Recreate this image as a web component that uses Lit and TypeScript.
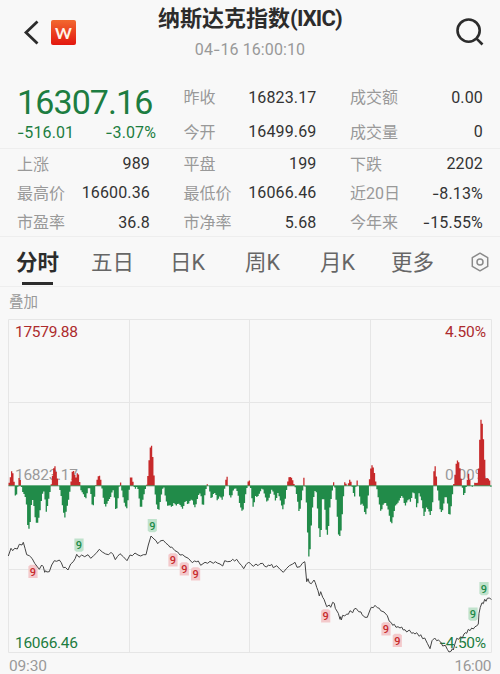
import { LitElement, html, css, svg } from 'lit';
import { customElement, property } from 'lit/decorators.js';
import { classMap } from 'lit/directives/class-map.js';

type Segment = { dx: number; dy: number; data: string };
type Point = [number, number];

/** Samples are stored in thirds of a pixel, "x,y" pairs separated by blanks. */
const SCALE = 3;

const VOLUME: Segment[] = [
  {
    dx: 0,
    dy: 0,
    data: `25,-25 28,18 33,30 36,53 40,28 44,0 46,-30 49,-30 52,-12 55,8 58,30 63,8 66,-15 75,-30 80,-60
      82,-115 86,-125 89,-138 92,-80 96,-40 100,-45 106,-100 111,-118 118,-90 124,-45 130,-10 134,-30
      140,-90 143,-55 149,-25 153,0 156,22 160,45 163,66 168,45 173,18 176,0 182,-20 188,-65 194,-98
      200,-70 207,-35 212,0 215,35 219,50 223,35 228,25 233,42 238,25 241,-10 250,-25 257,-40 262,-20
      267,0 272,-20 278,-70 283,-40 287,0 290,15 297,35 302,20 306,-8 311,-45 316,-65 325,-45 333,-32
      337,-15 341,-12 346,-65 349,-80 354,-40 358,-2 363,14 366,-20 375,-60 381,-68 387,-20 391,25
      397,25 400,5 405,-12 409,-2 414,-10 419,-50 423,-74 429,-40 434,-18 438,-2 442,10 445,50 450,110
      453,126 457,112 460,55 463,20 465,-20 470,-60 476,-78 482,-40 487,-10 492,-5 497,-40 503,-60`,
  },
  {
    dx: 480,
    dy: 0,
    data: `0,-75 5,-5 10,0 15,-35 22,-60 30,-58 36,-65 42,-50 48,-60 55,-52 62,-60 68,-70 73,-55 77,-42
      84,-58 90,-45 96,-40 102,-60 106,-66 112,-40 118,-20 123,-30 129,-70 134,-30 139,-5 143,9 147,-5
      154,-42 160,-25 166,-20 172,-45 180,-30 188,-45 193,-15 197,15 200,34 204,12 207,-25 214,-38
      219,-15 226,-5 233,-20 238,-50 245,-76 251,-70 256,-30 261,-5 265,16 270,16 273,-20 280,-68
      286,-30 292,-35 300,-20 307,-5 315,-30 321,-50 328,-35 335,-12 341,-20 347,-48 354,-20 360,-40
      368,-72 375,-45 380,-10 384,18 388,28 396,23 402,5 406,-5 412,-40 418,-85 424,-45 429,-5 432,28
      435,0 438,-20 441,-105 445,-185 448,-240 452,-150 457,-70 463,-20 468,-10 472,-60 478,-156
      483,-150 487,-40 493,-40 498,-130 503,-150 506,-120`,
  },
  {
    dx: 990,
    dy: 0,
    data: `0,-60 5,-30 9,0 12,18 15,-10 20,-60 25,-145 29,-152 34,-130 39,-50 43,0 46,26 49,-5 54,4
      60,21 65,5 70,-20 73,-40 78,0 83,24 87,-20 93,-60 98,-50 104,-80 109,-88 114,-40 118,15 123,58
      127,63 132,48 136,20 140,-5 147,-50 153,-80 160,-55 166,-50 173,-65 179,-95 184,-119 190,-90
      196,-60 205,-50 212,-35 217,-28 225,-62 232,-45 238,-40 242,-50 249,-18 254,-25 261,-73 267,-22
      274,-40 282,-91 290,-63 296,-75 302,-91 308,-50 312,50 317,62 320,15 324,-25 330,-70 336,-83
      342,-50 347,-25 353,-55 358,-100 364,-60 369,-10 374,25 380,79 388,68 393,25 397,-5 402,-34
      407,-10 411,10 415,40 420,15 424,-5 431,0 437,17 440,-8 445,40 449,135 454,216 459,160 463,100
      467,18 470,37 473,10 477,30 481,0 484,-5`,
  },
];

const PRICE: Segment[] = [
  {
    dx: 0,
    dy: 1530,
    data: `25,138 33,115 38,122 44,115 52,117 58,103 66,105 70,97 75,115 80,134 88,137 96,145 104,160
      112,170 118,178 125,165 130,170 134,187 137,182 140,186 148,185 155,165 163,152 170,154 178,150
      184,158 190,173 196,172 204,180 212,162 220,155 226,145 230,133 237,142 245,135 254,140 264,134
      272,145 280,138 290,128 298,118 307,126 317,132 326,134 333,127 339,133 346,149 352,140 360,131
      370,140 381,152 390,135 397,137 405,129 414,135 422,138 430,134 438,134 445,105 453,78 462,87
      468,92 473,101 478,96 480,94`,
  },
  {
    dx: 480,
    dy: 1200,
    data: `3,422 10,421 18,430 25,435 30,442 35,441 45,452 53,456 60,465 68,464 75,470 85,475 97,488
      103,483 110,485 115,483 122,496 135,487 143,490 150,484 160,490 166,485 172,489 180,492 188,498
      194,482 203,485 212,484 218,478 224,483 230,478 237,488 245,497 251,506 258,494 266,486 272,492
      280,499 288,492 294,497 300,491 308,490 314,499 320,501 325,495 330,497 335,493 340,503 350,497
      360,508 370,517 380,505 388,497 398,492 405,487 411,502 420,500 427,490 434,485`,
  },
  {
    dx: 870,
    dy: 1650,
    data: `45,40 50,95 54,86 58,98 64,101 72,90 76,98 80,112 84,122 88,138 92,125 98,142 102,148 110,170
      118,165 122,172 128,157 133,160 136,175 145,190 150,208 152,200 154,210 158,196 164,198 170,192
      175,193 180,182 188,188 192,178 198,175 206,185 213,186 216,194 225,202 232,202 240,180 244,172
      250,173 255,166 262,173 268,175 272,182 282,186 292,197 298,214 304,218 308,226 313,223 318,232
      324,230 330,234 335,231 340,240 345,239 350,246 358,240 365,250 370,248 375,252 380,248 388,259
      392,254 398,266 404,264 412,280 420,296 426,272 434,264 440,272 445,270 452,276 458,288 466,286
      472,298 477,306 484,303 487,296 490,300 494,284 500,265 506,268 512,260 517,264 522,252 526,248
      530,250 535,238 540,242 545,234 550,237 555,230 560,228 565,222 567,190 571,172 576,158 580,161
      584,148 588,154 592,145 599,144 604,149`,
  },
];

const MARKS: { x: number; y: number; up: boolean }[] = [
  { x: 33, y: 571.5, up: false },
  { x: 79, y: 545, up: true },
  { x: 152.3, y: 525.5, up: true },
  { x: 173, y: 560, up: false },
  { x: 184.3, y: 569, up: false },
  { x: 195.6, y: 574, up: false },
  { x: 325.7, y: 616, up: false },
  { x: 386, y: 629, up: false },
  { x: 397.3, y: 640.5, up: false },
  { x: 473, y: 614, up: true },
  { x: 484, y: 588.5, up: true },
];

const QUOTES = [
  [['昨收', '16823.17'], ['成交额', '0.00']],
  [['今开', '16499.69'], ['成交量', '0']],
];

const DETAILS = [
  ['上涨', '989'], ['平盘', '199'], ['下跌', '2202'],
  ['最高价', '16600.36'], ['最低价', '16066.46'], ['近20日', '-8.13%'],
  ['市盈率', '36.8'], ['市净率', '5.68'], ['今年来', '-15.55%'],
];

const TABS = ['分时', '五日', '日K', '周K', '月K', '更多'];

function decode(segments: Segment[]): Point[] {
  return segments.flatMap(({ dx, dy, data }) =>
    data.trim().split(/\s+/).map((pair): Point => {
      const [x, y] = pair.split(',').map(Number);
      return [(x + dx) / SCALE, (y + dy) / SCALE];
    })
  );
}

/** Linear interpolation of a sampled series. */
function valueAt(points: Point[], x: number): number {
  const i = points.findIndex((p) => p[0] >= x);
  if (i <= 0) return i === 0 ? points[0][1] : points[points.length - 1][1];
  const [x0, y0] = points[i - 1];
  const [x1, y1] = points[i];
  return y0 + ((y1 - y0) * (x - x0)) / (x1 - x0);
}

/** Sets the sign of a negative number in a face with a wider hyphen. */
function signed(value: string) {
  return value.startsWith('-') ? html`<span class="sign">-</span>${value.slice(1)}` : value;
}

/**
 * `<minute-chart>` – intraday price line with the per-minute bars around the zero axis.
 */
@customElement('minute-chart')
export class MinuteChart extends LitElement {
  static styles = css`
    :host {
      display: block;
    }

    svg {
      display: block;
      font-family: Roboto, 'Noto Sans CJK SC', sans-serif;
    }

    .grid {
      fill: none;
      stroke: #e6e6e6;
      stroke-width: 1;
    }

    .bars.up {
      fill: #c72a2b;
    }

    .bars.down {
      fill: #218b49;
    }

    .axis {
      stroke: #218b49;
      stroke-width: 0.8;
    }

    .price {
      fill: none;
      stroke: #444;
      stroke-width: 1;
      stroke-linejoin: round;
    }

    .label {
      font-size: 15.5px;
      fill: #9a9a9a;
    }

    .label.up {
      fill: #ad2b2d;
    }

    .label.down {
      fill: #1d7d41;
    }

    .sign {
      font-family: Inter, sans-serif;
    }

    .end {
      text-anchor: end;
    }

    .tag.up {
      fill: #c0e2cc;
    }

    .tag.down {
      fill: #f3c9cb;
    }

    .nine {
      font-size: 11px;
      font-weight: 500;
      text-anchor: middle;
    }

    .nine.up {
      fill: #218b49;
    }

    .nine.down {
      fill: #c72a2b;
    }
  `;

  private barPath(up: boolean): string {
    const points = decode(VOLUME);
    const step = 483 / 390;
    let d = '';
    for (let i = 0; i < 390; i++) {
      const x = 8.5 + i * step;
      const v = valueAt(points, x + step / 2);
      if (v > 0 === up && Math.abs(v) > 0.4) {
        d += `M${x.toFixed(2)} 485.8h${(step + 0.05).toFixed(2)}v${(-v).toFixed(2)}h${(-step - 0.05).toFixed(2)}z`;
      }
    }
    return d;
  }

  private renderMark({ x, y, up }: { x: number; y: number; up: boolean }) {
    const cls = up ? 'up' : 'down';
    // green tags point down at the line, red ones point up
    const d = up
      ? `M${x - 4.6} ${y - 6.4}h9.2v11.6l-2 1.6h-5.2l-2-1.6z`
      : `M${x - 4.6} ${y + 6.4}h9.2v-11.6l-2-1.6h-5.2l-2 1.6z`;
    return svg`
      <path class="tag ${cls}" d=${d}></path>
      <text class="nine ${cls}" x=${x} y=${y + 4}>9</text>
    `;
  }

  render() {
    const line = decode(PRICE).map((p) => p.map((n) => n.toFixed(1)).join(',')).join(' ');
    return html`
      <svg width="500" height="356" viewBox="0 318 500 356">
        <path
          class="grid"
          d="M8.5 319.5h483v333h-483zM8.5 402.5h483M8.5 569.5h483M129.5 319.5v333M249.5 319.5v333M370.5 319.5v333"
        ></path>
        <text class="label" x="15" y="480" textLength="63">16823.17</text>
        <text class="label end" x="486" y="480" textLength="41">0.00%</text>
        <path class="bars up" d=${this.barPath(true)}></path>
        <path class="bars down" d=${this.barPath(false)}></path>
        <path class="axis" d="M8.5 485.8h483"></path>
        ${MARKS.map((m) => this.renderMark(m))}
        <text class="label up" x="15" y="336.5" textLength="63">17579.88</text>
        <text class="label up end" x="486" y="336.5" textLength="41">4.50%</text>
        <text class="label down" x="15" y="647.5" textLength="63">16066.46</text>
        <text class="label down end" x="486" y="647.5" textLength="47"><tspan class="sign">-</tspan>4.50%</text>
        <polyline class="price" points=${line}></polyline>
        <text class="label" x="9" y="670.5" textLength="38">09:30</text>
        <text class="label end" x="491.5" y="670.5" textLength="37">16:00</text>
      </svg>
    `;
  }
}

/**
 * `<app-root>` – quote page of a stock index.
 */
@customElement('app-root')
export class AppRoot extends LitElement {
  static styles = css`
    :host {
      display: block;
      width: 500px;
      height: 674px;
      overflow: hidden;
      background: #f8f8f8;
      color: #333;
      font-family: Roboto, 'Noto Sans CJK SC', sans-serif;
      font-size: 16px;
    }

    header {
      display: grid;
      grid-template-columns: 100px 1fr 100px;
      height: 80px;
    }

    .left {
      display: flex;
      align-items: flex-start;
      gap: 12px;
      padding: 20px 0 0 23px;
    }

    .logo {
      display: grid;
      place-items: center;
      width: 25px;
      height: 25px;
      border-radius: 2px;
      background: linear-gradient(#f2682f, #e3170f);
      color: #fff3e8;
      font: 700 16px/25px Lato, sans-serif;
    }

    .heading {
      display: flex;
      flex-direction: column;
      align-items: center;
      padding-top: 3px;
    }

    h1 {
      margin: 0;
      font-size: 22px;
      line-height: 31px;
      font-weight: 700;
      color: #2c2c2c;
      white-space: nowrap;
    }

    .code {
      letter-spacing: -0.8px;
    }

    time {
      font-size: 16px;
      line-height: 30px;
      letter-spacing: 0.1px;
      color: #999;
    }

    .sign {
      font-family: Inter, sans-serif;
      letter-spacing: 0;
    }

    .search {
      justify-self: end;
      margin: 17px 15px 0 0;
    }

    .quote {
      display: grid;
      grid-template-columns: 133px 133px 133px;
      column-gap: 33.5px;
      height: 68px;
      padding: 0 17px;
      border-bottom: 1px solid #eee;
    }

    .last {
      display: flex;
      flex-direction: column;
      color: #1d7d41;
    }

    .last strong {
      padding-top: 1px;
      font-size: 34px;
      line-height: 42px;
      font-weight: 400;
      letter-spacing: -0.9px;
    }

    .change {
      display: flex;
      justify-content: space-between;
      width: 139px;
      line-height: 18px;
      letter-spacing: 0.1px;
    }

    .stack {
      display: grid;
      grid-auto-rows: 34.5px;
    }

    .pair {
      display: flex;
      align-items: center;
      justify-content: space-between;
      white-space: nowrap;
    }

    .pair .name {
      padding-bottom: 2px;
      color: #999;
    }

    .pair .value {
      letter-spacing: 0.15px;
    }

    .details {
      display: grid;
      grid-template-columns: repeat(3, 133px);
      grid-auto-rows: 29.3px;
      column-gap: 33.5px;
      height: 88px;
      box-sizing: border-box;
      padding: 0 17px;
      border-bottom: 1px solid #eee;
    }

    nav {
      display: grid;
      grid-template-columns: 75px 75px 75px 75px 75px 75px 50px;
      height: 49px;
      border-bottom: 1px solid #eee;
    }

    .tab {
      display: flex;
      flex-direction: column;
      align-items: center;
      font-size: 21.5px;
      line-height: 51px;
      height: 49px;
      color: #666;
    }

    .tab.active {
      color: #2c2c2c;
      font-weight: 700;
    }

    .tab.active::after {
      content: '';
      width: 31px;
      height: 3px;
      margin-top: -6px;
      flex: none;
      background: #2c2c2c;
    }

    .settings {
      align-self: center;
      margin-left: 19.5px;
    }

    .overlay {
      height: 31px;
      padding-left: 9px;
      font-size: 14.5px;
      line-height: 31px;
      color: #999;
    }
  `;

  @property() activeTab = '分时';

  private renderPair([name, value]: string[]) {
    return html`
      <div class="pair"><span class="name">${name}</span><span class="value">${signed(value)}</span></div>
    `;
  }

  render() {
    return html`
      <header>
        <div class="left">
          <svg width="16" height="25" viewBox="0 0 16 25" fill="none" stroke="#2c2c2c" stroke-width="2.8">
            <path d="M14.5 1.5 3 12.5l11.5 11"></path>
          </svg>
          <span class="logo">W</span>
        </div>
        <div class="heading">
          <h1>纳斯达克指数<span class="code">(IXIC)</span></h1>
          <time>04${signed('-16')} 16:00:10</time>
        </div>
        <svg class="search" width="30" height="30" viewBox="0 0 30 30" fill="none" stroke="#2c2c2c" stroke-width="2.6">
          <circle cx="13.6" cy="13.6" r="11.1"></circle>
          <path d="m21.3 21.3 6.2 6.2"></path>
        </svg>
      </header>
      <section class="quote">
        <div class="last">
          <strong>16307.16</strong>
          <div class="change"><span>${signed('-516.01')}</span><span>${signed('-3.07%')}</span></div>
        </div>
        ${[0, 1].map((col) => html`
          <div class="stack">${QUOTES.map((row) => this.renderPair(row[col]))}</div>
        `)}
      </section>
      <section class="details">${DETAILS.map((d) => this.renderPair(d))}</section>
      <nav>
        ${TABS.map((t) => html`
          <div class=${classMap({ tab: true, active: t === this.activeTab })}>${t}</div>
        `)}
        <svg class="settings" width="20" height="20" viewBox="0 0 20 20" fill="none" stroke="#8a8a8a" stroke-width="1.5">
          <path d="M10 1.2 17.7 5.6v8.8L10 18.8 2.3 14.4V5.6z" stroke-linejoin="round"></path>
          <circle cx="10" cy="10" r="3"></circle>
        </svg>
      </nav>
      <div class="overlay">叠加</div>
      <minute-chart></minute-chart>
    `;
  }
}
